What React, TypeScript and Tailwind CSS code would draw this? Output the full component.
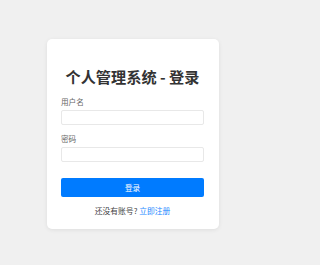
export default function App() {
  return (
    <div
      className="min-h-[265px] w-full bg-[#f0f0f0]"
      style={{ fontFamily: '"Noto Sans CJK SC", "Noto Sans", sans-serif' }}
    >
      <div className="flex w-[265px] justify-center pt-[39px]">
        <div className="w-[172px] rounded-[5px] bg-white px-[14.5px] pb-[13.5px] pt-[25.5px] shadow-[0_1px_4px_rgba(0,0,0,0.08)]">
          <h1 className="text-center text-[15.2px] font-bold leading-[22px] text-[#333]">
            个人管理系统 - 登录
          </h1>

          <form className="mt-[10.5px]" onSubmit={(e) => e.preventDefault()}>
            <label className="block text-[7.6px] leading-[10px] text-[#666]">
              用户名
            </label>
            <input
              type="text"
              className="mt-[3px] block h-[15px] w-full rounded-[2px] border border-[#e8e8e8] bg-white outline-none"
            />

            <label className="mt-[9px] block text-[7.6px] leading-[10px] text-[#666]">
              密码
            </label>
            <input
              type="password"
              className="mt-[3px] block h-[15px] w-full rounded-[2px] border border-[#e8e8e8] bg-white outline-none"
            />

            <button
              type="submit"
              className="mt-[16px] block h-[19px] w-full rounded-[2px] bg-[#007bff] text-[7.6px] leading-[19px] text-white"
            >
              登录
            </button>
          </form>

          <p className="mt-[8.5px] text-center text-[7.8px] leading-[10px] text-[#444]">
            还没有账号? <span className="text-[#1a88ff]">立即注册</span>
          </p>
        </div>
      </div>
    </div>
  );
}
